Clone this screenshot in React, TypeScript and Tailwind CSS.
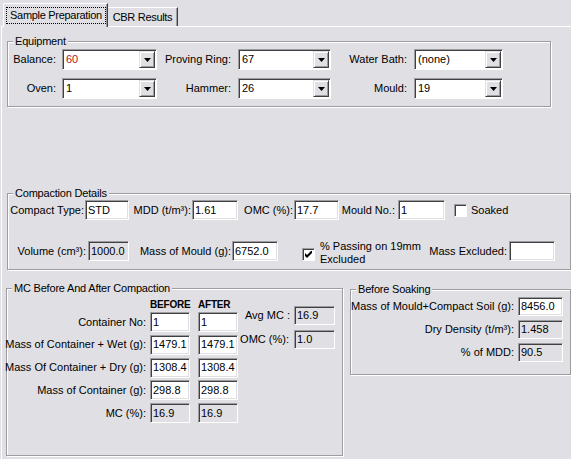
import React from 'react';

function Field({ value = '', className = '', disabled = false }: { value?: string; className?: string; disabled?: boolean }) {
  return (
    <div
      className={`flex shrink-0 items-center border border-t-[#9d9da1] border-l-[#9d9da1] border-b-white border-r-white pl-[2px] leading-none shadow-[inset_1px_1px_0_#404040,inset_-1px_-1px_0_#e0dfe3] ${
        disabled ? 'bg-[#e0dfe3]' : 'bg-white'
      } ${className}`}
    >
      {value}
    </div>
  );
}

function Combo({ value, className = '', red = false }: { value: string; className?: string; red?: boolean }) {
  return (
    <div
      className={`flex h-[21px] shrink-0 items-stretch border border-t-[#9d9da1] border-l-[#9d9da1] border-b-white border-r-white bg-white p-[1px] shadow-[inset_1px_1px_0_#404040] ${className}`}
    >
      <div className={`flex flex-1 items-center pl-[2px] leading-none ${red ? 'text-[#b0141e]' : ''}`}>{value}</div>
      <div className="flex w-[16px] items-center justify-center border border-t-[#e0dfe3] border-l-[#e0dfe3] border-b-[#404040] border-r-[#404040] bg-[#e0dfe3] shadow-[inset_1px_1px_0_#fff,inset_-1px_-1px_0_#9d9da1]">
        <svg width="7" height="4" viewBox="0 0 7 4">
          <path d="M0 0h7L3.5 4z" fill="#000" />
        </svg>
      </div>
    </div>
  );
}

function Check({ checked = false, className = '' }: { checked?: boolean; className?: string }) {
  return (
    <div
      className={`flex h-[13px] w-[13px] shrink-0 items-center justify-center border border-t-[#9d9da1] border-l-[#9d9da1] border-b-white border-r-white bg-white shadow-[inset_1px_1px_0_#404040] ${className}`}
    >
      {checked && (
        <svg width="7" height="7" viewBox="0 0 7 7">
          <path d="M0 2L2 4L7 -1V2L2 7L0 5Z" fill="#000" />
        </svg>
      )}
    </div>
  );
}

function Group({ title, className = '', children }: { title: string; className?: string; children: React.ReactNode }) {
  return (
    <fieldset className={`border border-[#9d9da1] shadow-[1px_1px_0_#fff,inset_1px_1px_0_#fff] ${className}`}>
      <legend className="ml-[5px] bg-[#e0dfe3] px-[2px] leading-[13px] tracking-[-0.2px]">{title}</legend>
      {children}
    </fieldset>
  );
}

function Label({ text, className = '' }: { text: React.ReactNode; className?: string }) {
  return <div className={`flex shrink-0 justify-end whitespace-nowrap leading-[13px] ${className}`}>{text}</div>;
}

const mcRows = [
  { label: 'Container No:', before: '1', after: '1' },
  { label: 'Mass of Container + Wet (g):', before: '1479.1', after: '1479.1' },
  { label: 'Mass Of Container + Dry (g):', before: '1308.4', after: '1308.4' },
  { label: 'Mass of Container (g):', before: '298.8', after: '298.8' },
  { label: 'MC (%):', before: '16.9', after: '16.9', disabled: true },
];

const soakRows = [
  { label: 'Mass of Mould+Compact Soil (g):', value: '8456.0' },
  { label: 'Dry Density (t/m³):', value: '1.458', disabled: true },
  { label: '% of MDD:', value: '90.5', disabled: true },
];

export default function App() {
  return (
    <div className="h-[459px] w-[571px] overflow-hidden bg-[#e0dfe3] font-['Liberation_Sans',Arial,sans-serif] text-[11px] text-black">
      {/* tabs */}
      <div className="flex h-[26px] items-end pl-[3px]">
        <div className="relative z-10 -mb-[1px] flex h-[24px] w-[105px] items-start border-l border-t border-r border-l-white border-t-white border-r-[#404040] bg-[#e0dfe3] pl-[2px] pr-[1px] pt-[3px] shadow-[inset_-1px_0_0_#9d9da1]">
          <span className="flex h-[17px] w-full items-center justify-center border border-dotted border-black leading-none tracking-[-0.3px]">
            Sample Preparation
          </span>
        </div>
        <div className="flex h-[19px] w-[70px] items-center justify-center border-t border-r border-t-white border-r-[#404040] bg-[#e0dfe3] leading-none tracking-[-0.3px] shadow-[inset_-1px_0_0_#9d9da1]">
          CBR Results
        </div>
      </div>

      {/* tab page */}
      <div className="ml-[1px] h-[440px] border-l border-t border-white">
        <Group title="Equipment" className="ml-[5px] mt-[8px] w-[544px]">
          <div className="flex flex-col gap-[8px] pb-[7px] pt-[1px]">
            <div className="flex items-center">
              <Label text="Balance:" className="w-[48px]" />
              <Combo value="60" red className="ml-[6px] w-[95px]" />
              <Label text="Proving Ring:" className="w-[74px]" />
              <Combo value="67" className="ml-[7px] w-[93px]" />
              <Label text="Water Bath:" className="w-[76px]" />
              <Combo value="(none)" className="ml-[7px] w-[89px]" />
            </div>
            <div className="flex items-center">
              <Label text="Oven:" className="w-[48px]" />
              <Combo value="1" className="ml-[6px] w-[95px]" />
              <Label text="Hammer:" className="w-[74px]" />
              <Combo value="26" className="ml-[7px] w-[93px]" />
              <Label text="Mould:" className="w-[76px]" />
              <Combo value="19" className="ml-[7px] w-[89px]" />
            </div>
          </div>
        </Group>

        <Group title="Compaction Details" className="ml-[5px] mt-[80px] w-[564px]">
          <div className="flex h-[20px] items-center">
            <Label text="Compact Type:" className="w-[77px] pr-[1px]" />
            <Field value="STD" className="h-[20px] w-[44px]" />
            <Label text="MDD (t/m³):" className="w-[63px] pr-[1px]" />
            <Field value="1.61" className="h-[20px] w-[46px]" />
            <Label text="OMC (%):" className="w-[56px] pr-[1px]" />
            <Field value="17.7" className="h-[20px] w-[45px]" />
            <Label text="Mould No.:" className="w-[59px] pr-[3px]" />
            <Field value="1" className="h-[20px] w-[47px]" />
            <Check className="ml-[9px]" />
            <span className="ml-[4px] leading-[13px]">Soaked</span>
          </div>
          <div className="mt-[21px] flex h-[28px] items-start">
            <Label text="Volume (cm³):" className="h-[20px] w-[80px] items-center pr-[2px]" />
            <Field value="1000.0" disabled className="h-[20px] w-[41px]" />
            <Label text="Mass of Mould (g):" className="h-[20px] w-[103px] items-center pr-[1px]" />
            <Field value="6752.0" className="h-[20px] w-[46px]" />
            <Check checked className="ml-[24px] mt-[7px]" />
            <div className="-mt-[1px] ml-[5px] w-[112px] leading-[13px]">
              % Passing on 19mm
              <br />
              Excluded
            </div>
            <Label text="Mass Excluded:" className="h-[20px] w-[77px] items-center pr-[2px]" />
            <Field className="h-[20px] w-[46px]" />
          </div>
        </Group>

        <div className="mt-[12px] flex items-start">
          <Group title="MC Before And After Compaction" className="ml-[4px] w-[337px]">
            <div className="flex items-start pb-[32px]">
              <div className="mt-[3px] flex flex-col">
                <div className="flex h-[13px] items-center text-[10px] font-bold leading-none tracking-[-0.2px]">
                  <div className="w-[143px]" />
                  <div className="w-[48px]">BEFORE</div>
                  <div>AFTER</div>
                </div>
                <div className="mt-[1px] flex flex-col gap-[2.75px]">
                  {mcRows.map((r) => (
                    <div key={r.label} className="flex h-[20px] items-center">
                      <Label text={r.label} className="w-[139px]" />
                      <Field value={r.before} disabled={r.disabled} className="ml-[4px] h-[20px] w-[40px]" />
                      <Field value={r.after} disabled={r.disabled} className="ml-[8px] h-[20px] w-[40px]" />
                    </div>
                  ))}
                </div>
              </div>
              <div className="mt-[11px] flex flex-col gap-[5px]">
                <div className="flex h-[19px] items-center">
                  <Label text="Avg MC :" className="w-[53px] pr-[1px]" />
                  <Field value="16.9" disabled className="ml-[3px] h-[19px] w-[41px]" />
                </div>
                <div className="flex h-[19px] items-center">
                  <Label text="OMC (%):" className="w-[53px] pr-[2px]" />
                  <Field value="1.0" disabled className="ml-[3px] h-[19px] w-[41px]" />
                </div>
              </div>
            </div>
          </Group>

          <Group title="Before Soaking" className="ml-[7px] mt-[1px] w-[221px]">
            <div className="mt-[1px] flex flex-col gap-[4px] pb-[12px]">
              {soakRows.map((r) => (
                <div key={r.label} className="flex h-[19px] items-center">
                  <Label text={r.label} className="w-[165px] pr-[2px]" />
                  <Field value={r.value} disabled={r.disabled} className="ml-[2px] h-[19px] w-[45px]" />
                </div>
              ))}
            </div>
          </Group>
        </div>
      </div>
    </div>
  );
}
